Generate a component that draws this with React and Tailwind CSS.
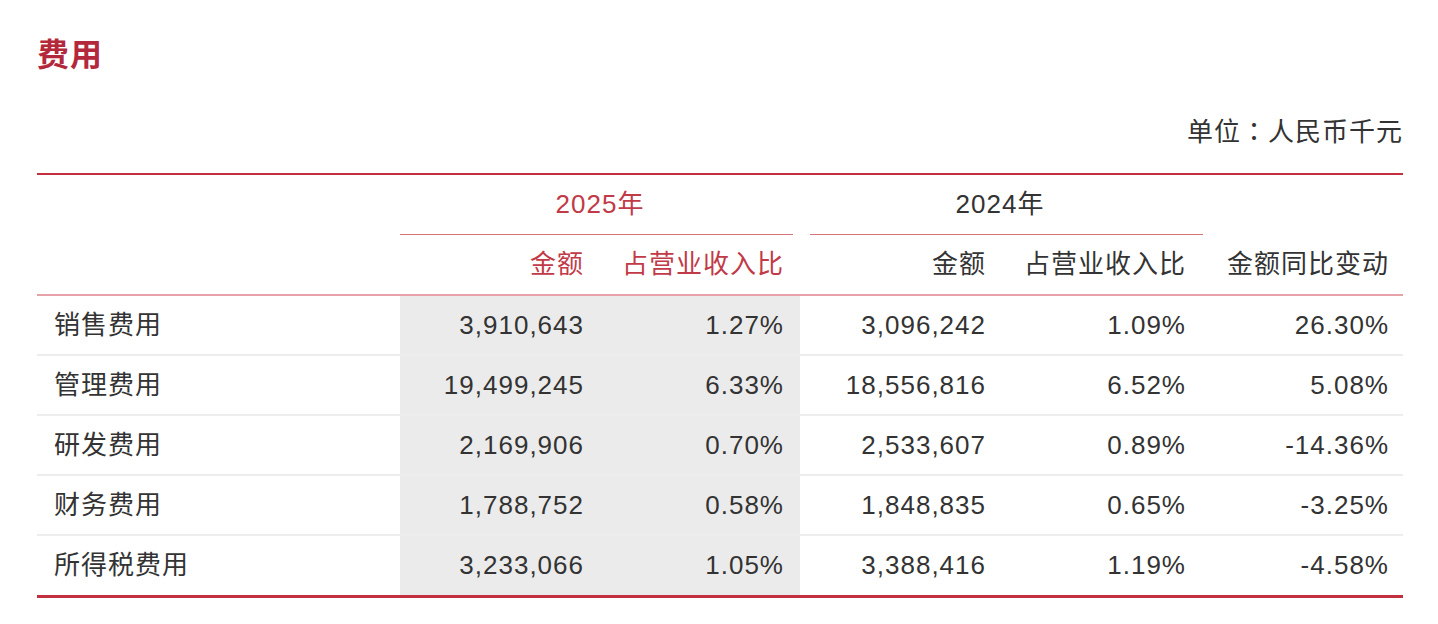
import React from 'react';

const rows = [
  ['销售费用', '3,910,643', '1.27%', '3,096,242', '1.09%', '26.30%'],
  ['管理费用', '19,499,245', '6.33%', '18,556,816', '6.52%', '5.08%'],
  ['研发费用', '2,169,906', '0.70%', '2,533,607', '0.89%', '-14.36%'],
  ['财务费用', '1,788,752', '0.58%', '1,848,835', '0.65%', '-3.25%'],
  ['所得税费用', '3,233,066', '1.05%', '3,388,416', '1.19%', '-4.58%'],
];

const font = { fontFamily: '"Liberation Sans", "Noto Sans CJK SC", sans-serif' };

function App() {
  return (
    <div
      className="w-[1438px] h-[624px] bg-white pl-[37px] pr-[35px] text-[#333] tracking-[1px]"
      style={font}
    >
      <h1 className="pt-[35px] text-[32px] leading-[40px] font-bold text-[#b3283b]">
        费用
      </h1>
      <div className="mt-[37px] text-right text-[26px] leading-[36px]">
        单位
        <span className="font-['Noto_Sans_CJK_TC',sans-serif]">：</span>
        人民币千元
      </div>

      <div className="mt-[23px] border-t-2 border-[#c2303f]">
        {/* header row 1 */}
        <div className="grid grid-cols-[363px_200px_200px_200px_200px_203px] h-[60px] text-[26px]">
          <div />
          <div className="col-span-2 flex flex-col">
            <div className="flex-1 flex items-center justify-center text-[#c13a48]">
              2025年
            </div>
            <div className="h-px bg-[#d8737d] mr-[7px]" />
          </div>
          <div className="col-span-2 flex flex-col">
            <div className="flex-1 flex items-center justify-center">2024年</div>
            <div className="h-px bg-[#d8737d] ml-[10px] -mr-[3px]" />
          </div>
          <div />
        </div>

        {/* header row 2 */}
        <div className="grid grid-cols-[363px_200px_200px_200px_200px_203px] h-[61px] items-center text-[26px] border-b-2 border-[#e7a2a9]">
          <div />
          <div className="text-right pr-[16px] text-[#c13a48]">金额</div>
          <div className="text-right pr-[16px] text-[#c13a48]">占营业收入比</div>
          <div className="text-right pr-[14px]">金额</div>
          <div className="text-right pr-[14px]">占营业收入比</div>
          <div className="text-right pr-[14px]">金额同比变动</div>
        </div>

        {rows.map((r, i) => (
          <div
            key={r[0]}
            className={
              'grid grid-cols-[363px_200px_200px_200px_200px_203px] text-[26px] ' +
              (i === rows.length - 1
                ? 'h-[62px] border-b-[3px] border-[#c2303f]'
                : 'h-[60px] border-b-2 border-[#ededed]')
            }
          >
            <div className="flex items-center pl-[17px]">{r[0]}</div>
            <div className="flex items-center justify-end pr-[16px] bg-[#ebebeb]">{r[1]}</div>
            <div className="flex items-center justify-end pr-[16px] bg-[#ebebeb]">{r[2]}</div>
            <div className="flex items-center justify-end pr-[14px]">{r[3]}</div>
            <div className="flex items-center justify-end pr-[14px]">{r[4]}</div>
            <div className="flex items-center justify-end pr-[14px]">{r[5]}</div>
          </div>
        ))}
      </div>
    </div>
  );
}

export default App;
